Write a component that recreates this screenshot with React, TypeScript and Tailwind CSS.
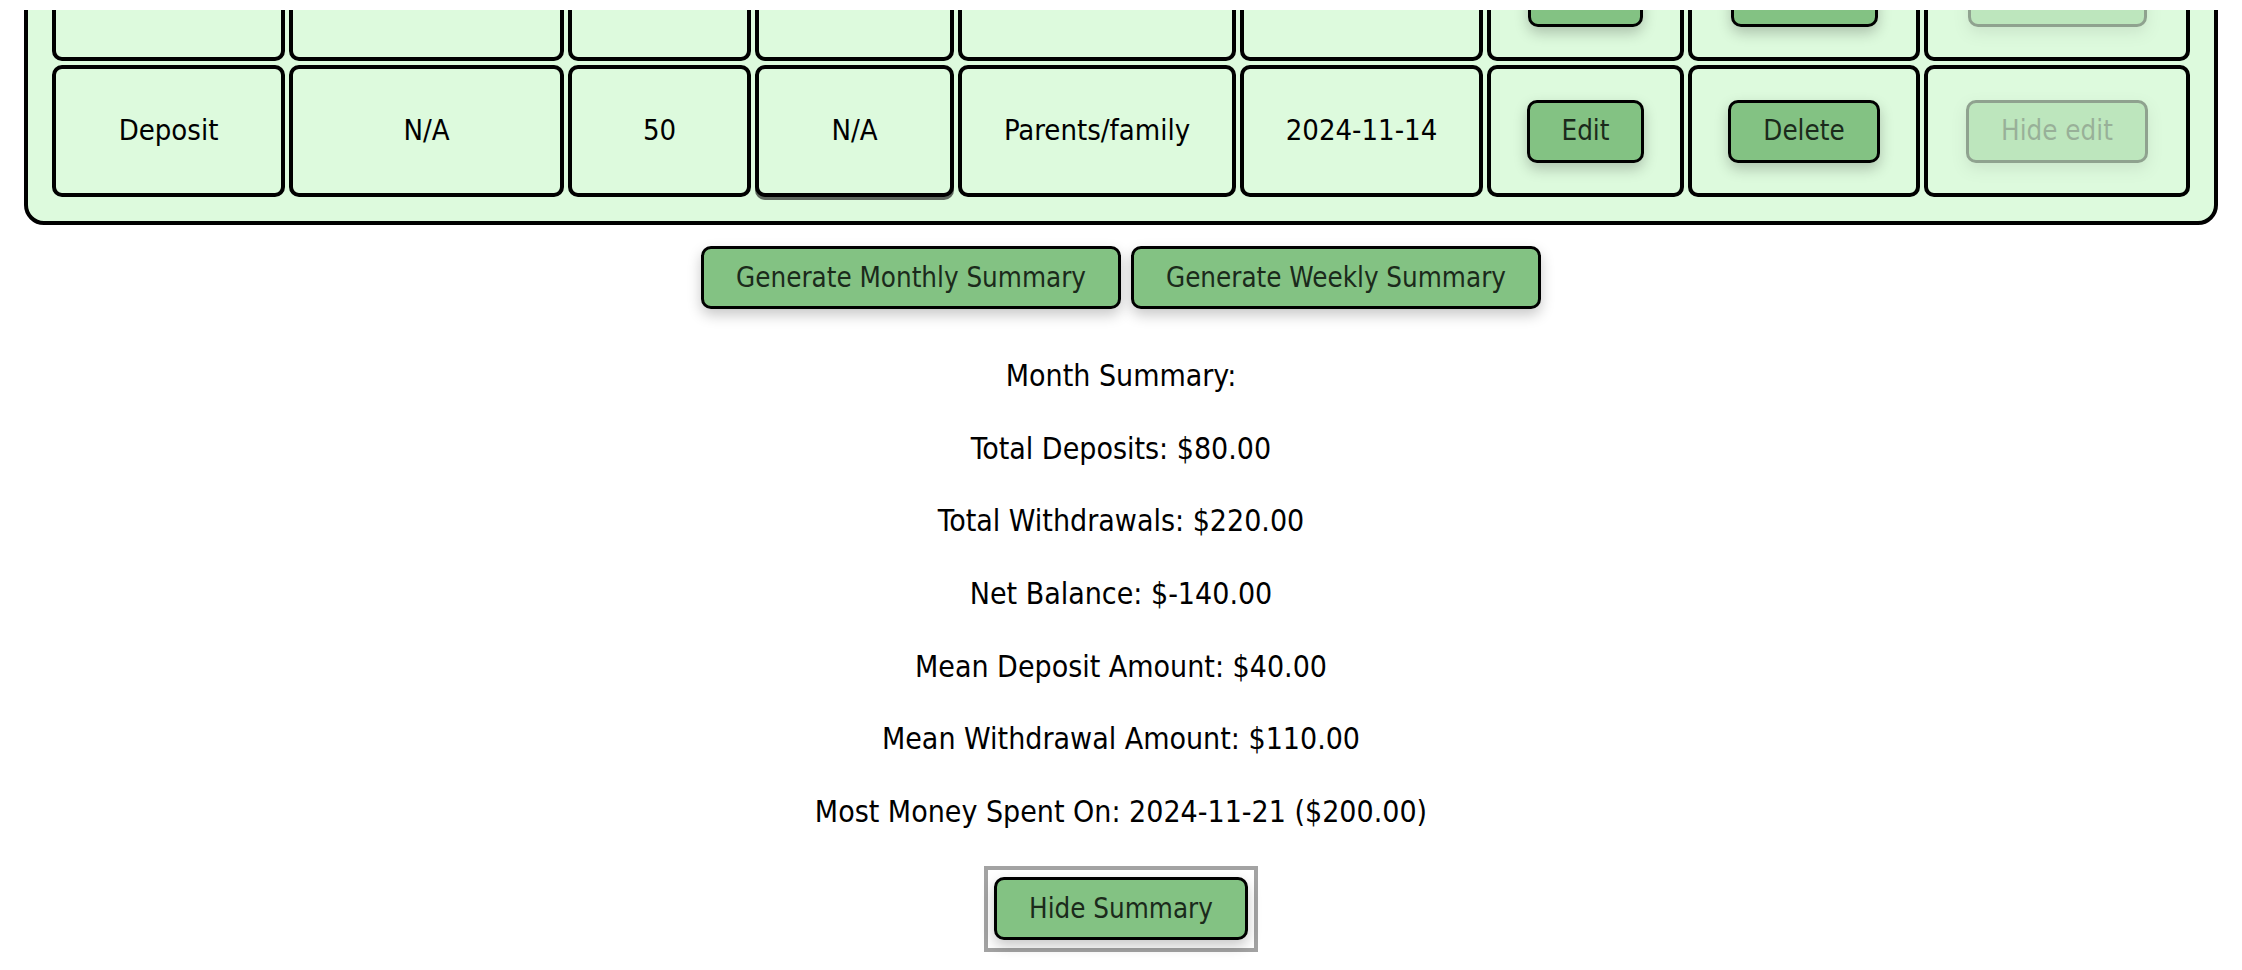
import React from 'react';

const cols = [233, 275, 183, 199, 278, 243, 197, 232, 266];

type Row = {
  type: string;
  category: string;
  amount: string;
  frequency: string;
  source: string;
  date: string;
};

// first row is scrolled out of view, only its lower edge shows
const rows: Row[] = [
  { type: '', category: '', amount: '', frequency: '', source: '', date: '' },
  { type: 'Deposit', category: 'N/A', amount: '50', frequency: 'N/A', source: 'Parents/family', date: '2024-11-14' },
];

const summary = [
  'Month Summary:',
  'Total Deposits: $80.00',
  'Total Withdrawals: $220.00',
  'Net Balance: $-140.00',
  'Mean Deposit Amount: $40.00',
  'Mean Withdrawal Amount: $110.00',
  'Most Money Spent On: 2024-11-21 ($200.00)',
];

const GreenButton: React.FC<{ children?: React.ReactNode; disabled?: boolean; className?: string }> = ({
  children,
  disabled,
  className = '',
}) => (
  <button
    disabled={disabled}
    className={`h-[63px] px-[32px] rounded-[10px] border-[3px] border-black bg-[#83c283] text-[#1b2a1b] text-[27.5px] shadow-[0_6px_14px_rgba(0,0,0,0.22)] ${
      disabled ? 'opacity-35' : ''
    } ${className}`}
  >
    {children}
  </button>
);

const Cell: React.FC<{ w: number; children?: React.ReactNode; odd?: boolean }> = ({ w, children, odd }) => (
  <div
    style={{ width: w }}
    className={`h-[132px] shrink-0 flex items-center justify-center rounded-[10px] border-[4px] border-black bg-[#ddfadd] text-[29px] ${
      odd ? 'shadow-[0_3px_0_rgba(40,40,40,0.7)]' : ''
    }`}
  >
    {children}
  </div>
);

export default function App() {
  return (
    <div className="relative h-[970px] overflow-hidden bg-white text-black font-['DejaVu_Sans_Condensed','DejaVu_Sans',sans-serif]">
      {/* top strip that sits over the scrolled table */}
      <div className="absolute inset-x-0 top-0 z-10 h-[10px] bg-white" />

      <div className="mx-[24px] mt-[-99px] rounded-[20px] border-[4px] border-black bg-[#ddfadd] p-[20px]">
        <div className="flex flex-col gap-[4px] p-[4px]">
          {rows.map((r, i) => {
            const hidden = i === 0;
            return (
              <div key={i} className="flex gap-[4px]">
                <Cell w={cols[0]}>{r.type}</Cell>
                <Cell w={cols[1]}>{r.category}</Cell>
                <Cell w={cols[2]}>{r.amount}</Cell>
                <Cell w={cols[3]} odd={i === 1}>{r.frequency}</Cell>
                <Cell w={cols[4]}>{r.source}</Cell>
                <Cell w={cols[5]}>{r.date}</Cell>
                <Cell w={cols[6]}>
                  <GreenButton className={hidden ? 'w-[115px]' : ''}>{hidden ? '' : 'Edit'}</GreenButton>
                </Cell>
                <Cell w={cols[7]}>
                  <GreenButton className={hidden ? 'w-[147px]' : ''}>{hidden ? '' : 'Delete'}</GreenButton>
                </Cell>
                <Cell w={cols[8]}>
                  <GreenButton disabled className={hidden ? 'w-[179px]' : ''}>
                    {hidden ? '' : 'Hide edit'}
                  </GreenButton>
                </Cell>
              </div>
            );
          })}
        </div>
      </div>

      <div className="mt-[21px] flex justify-center gap-[10px]">
        <GreenButton>Generate Monthly Summary</GreenButton>
        <GreenButton>Generate Weekly Summary</GreenButton>
      </div>

      <div className="mt-[47px] flex flex-col items-center gap-[32px] text-[30px] leading-[40.67px]">
        {summary.map((line) => (
          <p key={line}>{line}</p>
        ))}
      </div>

      <div className="mt-[33px] flex justify-center">
        <div className="border-[4px] border-[#a3a3a3] px-[6px] pt-[7px] pb-[8px]">
          <GreenButton>Hide Summary</GreenButton>
        </div>
      </div>
    </div>
  );
}
